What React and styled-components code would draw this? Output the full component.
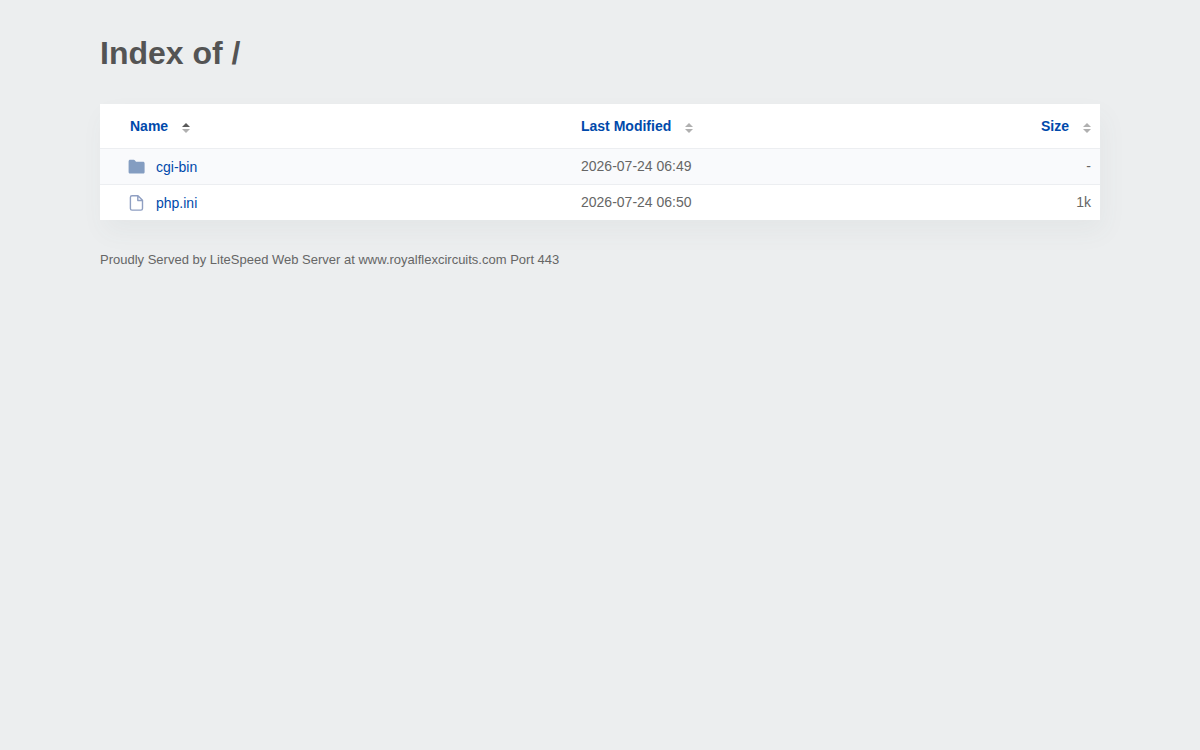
import React, { useState } from "react";
import styled, { createGlobalStyle } from "styled-components";

const entries = [
	{ name: "cgi-bin", type: "folder", modified: "2026-07-24 06:49", size: "-" },
	{ name: "php.ini", type: "file", modified: "2026-07-24 06:50", size: "1k" },
];

const columns = [
	{ key: "name", label: "Name" },
	{ key: "modified", label: "Last Modified" },
	{ key: "size", label: "Size", align: "right" },
];

const FolderIcon = () => (
	<Icon viewBox="0 0 17 16" aria-hidden="true">
		<path
			fill="#849dc1"
			d="M2.3.8h3.4c.6 0 1 .2 1.3.7L8 2.8h7c1 0 1.6.6 1.6 1.6v8.5c0 1-.6 1.6-1.6 1.6H2.2c-1 0-1.6-.6-1.6-1.6V2.4C.6 1.4 1.3.8 2.3.8z"
		/>
	</Icon>
);

const FileIcon = () => (
	<Icon viewBox="0 0 17 16" aria-hidden="true">
		<path
			fill="none"
			stroke="#8f9fc2"
			strokeWidth="1.4"
			strokeLinejoin="round"
			d="M4 .8h6l4.5 4.4v8.2c0 1-.6 1.7-1.6 1.7H4c-1 0-1.6-.7-1.6-1.7V2.5C2.4 1.5 3 .8 4 .8zM9.8 1v4.5h4.5"
		/>
	</Icon>
);

const SortIcon = ({ order }) => (
	<Arrows viewBox="0 0 8 10" aria-hidden="true">
		<path fill={order === "asc" ? "#5a5a5a" : "#b0b0b0"} d="M4 0l4 4H0z" />
		<path fill={order === "desc" ? "#5a5a5a" : "#b0b0b0"} d="M4 10l4-4H0z" />
	</Arrows>
);

const App = () => {
	const [sort, setSort] = useState({ key: "name", order: "asc" });

	const handleSort = (key) => {
		const order = sort.key === key && sort.order === "asc" ? "desc" : "asc";
		setSort({ key, order });
	};

	const rows = [...entries].sort((a, b) => {
		const result = a[sort.key].localeCompare(b[sort.key]);
		return sort.order === "asc" ? result : -result;
	});

	return (
		<>
			<GlobalStyle />
			<Page>
				<Title>Index of /</Title>
				<Table>
					<thead>
						<tr>
							{columns.map(({ key, label, align }) => (
								<HeadCell key={key} $column={key} $align={align}>
									<SortButton type="button" onClick={() => handleSort(key)}>
										{label}
										<SortIcon order={sort.key === key ? sort.order : null} />
									</SortButton>
								</HeadCell>
							))}
						</tr>
					</thead>
					<tbody>
						{rows.map((row) => (
							<Row key={row.name}>
								<NameCell>
									<EntryLink href={`/${row.name}`}>
										{row.type === "folder" ? <FolderIcon /> : <FileIcon />}
										{row.name}
									</EntryLink>
								</NameCell>
								<Cell>{row.modified}</Cell>
								<Cell $align="right">{row.size}</Cell>
							</Row>
						))}
					</tbody>
				</Table>
				<Footer>
					Proudly Served by LiteSpeed Web Server at www.royalflexcircuits.com Port 443
				</Footer>
			</Page>
		</>
	);
};

export default App;

const GlobalStyle = createGlobalStyle`
	* {
		box-sizing: border-box;
	}
	body {
		margin: 0;
		background: #eceeef;
		color: #666;
		font-family: "Liberation Sans", Arial, sans-serif;
		font-size: 14px;
		line-height: 20px;
	}
`;

const Page = styled.main`
	padding: 32px 50px;

	@media screen and (min-width: 1000px) {
		padding: 32px 100px;
	}
`;

const Title = styled.h1`
	margin: 0 0 30px;
	color: #545454;
	font-size: 32px;
	line-height: 42px;
`;

const Table = styled.table`
	width: 100%;
	table-layout: fixed;
	border-spacing: 0;
	background: #fff;
	box-shadow: 4px 12px 24px rgba(80, 90, 100, 0.05);
`;

const columnWidths = { name: "47.2%", modified: "31%", size: "auto" };

const HeadCell = styled.th`
	width: ${(props) => columnWidths[props.$column]};
	padding: ${(props) => (props.$column === "name" ? "12px 9px 12px 30px" : "12px 9px")};
	text-align: ${(props) => props.$align || "left"};
`;

const SortButton = styled.button`
	display: inline-flex;
	align-items: center;
	gap: 14px;
	padding: 0;
	border: 0;
	background: none;
	color: #0049ab;
	font: inherit;
	font-weight: bold;
	line-height: 20px;
	cursor: pointer;
	vertical-align: top;
`;

const Arrows = styled.svg`
	width: 8px;
	height: 10px;
	margin-top: 4px;
`;

const Row = styled.tr`
	&:nth-child(odd) {
		background: #f9fafc;
	}
`;

const Cell = styled.td`
	height: 36px;
	padding: 7px 9px 8px;
	border-top: 1px solid #eceef1;
	text-align: ${(props) => props.$align || "left"};
	vertical-align: top;
`;

const NameCell = styled(Cell)`
	padding: 8px 9px 7px 28px;
`;

const EntryLink = styled.a`
	display: flex;
	align-items: center;
	gap: 11px;
	color: #0049ab;
	text-decoration: none;

	&:hover {
		text-decoration: underline;
	}
`;

const Icon = styled.svg`
	flex: none;
	width: 17px;
	height: 16px;
`;

const Footer = styled.footer`
	padding-top: 30px;
	font-size: 13px;
`;
